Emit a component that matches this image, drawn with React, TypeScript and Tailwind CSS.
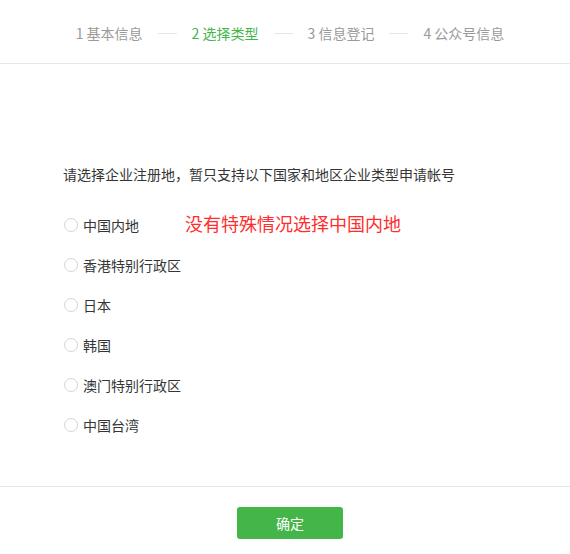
const steps = [
  { label: "1 基本信息", active: false },
  { label: "2 选择类型", active: true },
  { label: "3 信息登记", active: false },
  { label: "4 公众号信息", active: false },
];

const regions = ["中国内地", "香港特别行政区", "日本", "韩国", "澳门特别行政区", "中国台湾"];

export default function App() {
  return (
    <div
      className="w-[570px] h-[554px] overflow-hidden bg-white text-[#353535]"
      style={{ fontFamily: '"Noto Sans CJK SC", "Liberation Sans", sans-serif' }}
    >
      <div className="w-[580px]">
        {/* Step header */}
        <div className="h-[64px] pt-[3px] border-b border-[#e7e7eb] flex items-center justify-center text-[14px]">
          {steps.map((s, i) => (
            <div key={s.label} className="flex items-center">
              {i > 0 && <span className="block w-[19px] h-px bg-[#e7e7eb] mx-[15px]" />}
              <span className={s.active ? "text-[#44b549]" : "text-[#9a9a9a]"}>{s.label}</span>
            </div>
          ))}
        </div>

        {/* Region choice */}
        <div className="px-[63px] pt-[100px] pb-[41px] border-b border-[#e7e7eb]">
          <p className="text-[14px] leading-[20px]">请选择企业注册地，暂只支持以下国家和地区企业类型申请帐号</p>
          <div className="mt-[21px]">
            {regions.map((r, i) => (
              <div key={r} className="relative h-[40px] flex items-center text-[14px]">
                <span className="ml-px w-[14px] h-[14px] rounded-full border border-[#d4d4d4] bg-white" />
                <span className="ml-[5px]">{r}</span>
                {i === 0 && (
                  <span className="absolute left-[122px] top-[6px] text-[18px] leading-[24px] text-[#ff2e2e]">
                    没有特殊情况选择中国内地
                  </span>
                )}
              </div>
            ))}
          </div>
        </div>

        {/* Footer */}
        <div className="pt-[20px] flex justify-center">
          <button className="w-[106px] h-[32px] rounded-[3px] bg-[#44b549] text-white text-[14px]">确定</button>
        </div>
      </div>
    </div>
  );
}
